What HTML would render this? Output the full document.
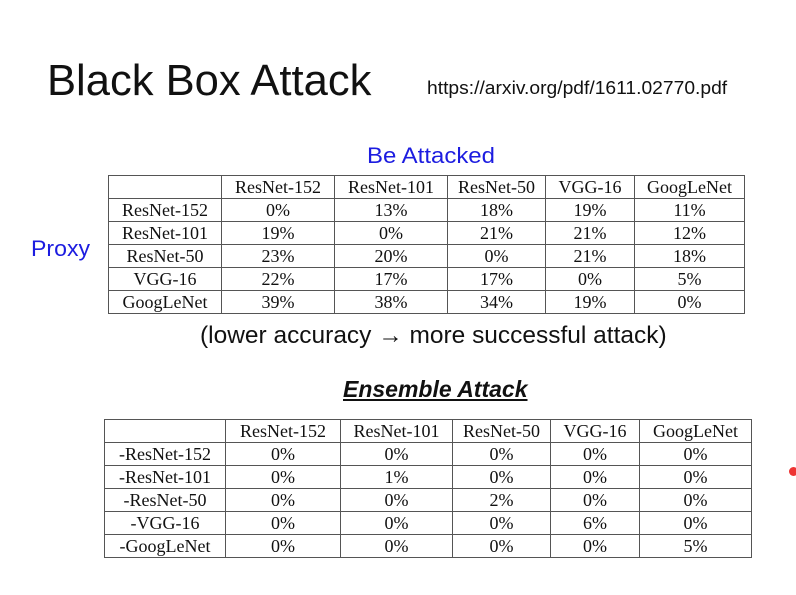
<!DOCTYPE html>
<html><head><meta charset="utf-8"><style>
body{margin:0;width:796px;height:595px;background:#fff;position:relative;overflow:hidden;font-family:"Liberation Sans",sans-serif;color:#111}
.a{position:absolute;white-space:nowrap;transform-origin:0 0}
table{position:absolute;border-collapse:collapse;table-layout:fixed;font-family:"Liberation Serif",serif;font-size:18px;color:#111}
td{border:1.5px solid #555;text-align:center;padding:0;line-height:20px;overflow:hidden;white-space:nowrap}
</style></head><body>
<div class="a" style="left:47px;top:56px;font-size:44px;transform:scaleX(0.99)">Black Box Attack</div>
<div class="a" style="left:427px;top:78px;font-size:18px;transform:scaleX(1.07)">https://arxiv.org/pdf/1611.02770.pdf</div>
<div class="a" style="left:367px;top:143px;font-size:22px;color:#1c1ce0;transform:scaleX(1.09)">Be Attacked</div>
<div class="a" style="left:31px;top:236px;font-size:22px;color:#1c1ce0;transform:scaleX(1.05)">Proxy</div>
<div class="a" style="left:200px;top:322px;font-size:24px;transform:scaleX(1.02)">(lower accuracy → more successful attack)</div>
<div class="a" style="left:343px;top:376px;font-size:23px;font-weight:bold;font-style:italic;text-decoration:underline;transform:scaleX(1.0)">Ensemble Attack</div>
<div style="position:absolute;left:789px;top:467px;width:9px;height:9px;border-radius:50%;background:#e33"></div>

<table style="left:108px;top:175px;width:636px;height:139px">
<colgroup><col style="width:113px"><col style="width:113px"><col style="width:113px"><col style="width:98px"><col style="width:89px"><col style="width:110px"></colgroup>
<tr><td></td><td>ResNet-152</td><td>ResNet-101</td><td>ResNet-50</td><td>VGG-16</td><td>GoogLeNet</td></tr>
<tr><td>ResNet-152</td><td>0%</td><td>13%</td><td>18%</td><td>19%</td><td>11%</td></tr>
<tr><td>ResNet-101</td><td>19%</td><td>0%</td><td>21%</td><td>21%</td><td>12%</td></tr>
<tr><td>ResNet-50</td><td>23%</td><td>20%</td><td>0%</td><td>21%</td><td>18%</td></tr>
<tr><td>VGG-16</td><td>22%</td><td>17%</td><td>17%</td><td>0%</td><td>5%</td></tr>
<tr><td>GoogLeNet</td><td>39%</td><td>38%</td><td>34%</td><td>19%</td><td>0%</td></tr>
</table>

<table style="left:104px;top:419px;width:647px;height:139px">
<colgroup><col style="width:121px"><col style="width:115px"><col style="width:112px"><col style="width:98px"><col style="width:89px"><col style="width:112px"></colgroup>
<tr><td></td><td>ResNet-152</td><td>ResNet-101</td><td>ResNet-50</td><td>VGG-16</td><td>GoogLeNet</td></tr>
<tr><td>-ResNet-152</td><td>0%</td><td>0%</td><td>0%</td><td>0%</td><td>0%</td></tr>
<tr><td>-ResNet-101</td><td>0%</td><td>1%</td><td>0%</td><td>0%</td><td>0%</td></tr>
<tr><td>-ResNet-50</td><td>0%</td><td>0%</td><td>2%</td><td>0%</td><td>0%</td></tr>
<tr><td>-VGG-16</td><td>0%</td><td>0%</td><td>0%</td><td>6%</td><td>0%</td></tr>
<tr><td>-GoogLeNet</td><td>0%</td><td>0%</td><td>0%</td><td>0%</td><td>5%</td></tr>
</table>
</body></html>
